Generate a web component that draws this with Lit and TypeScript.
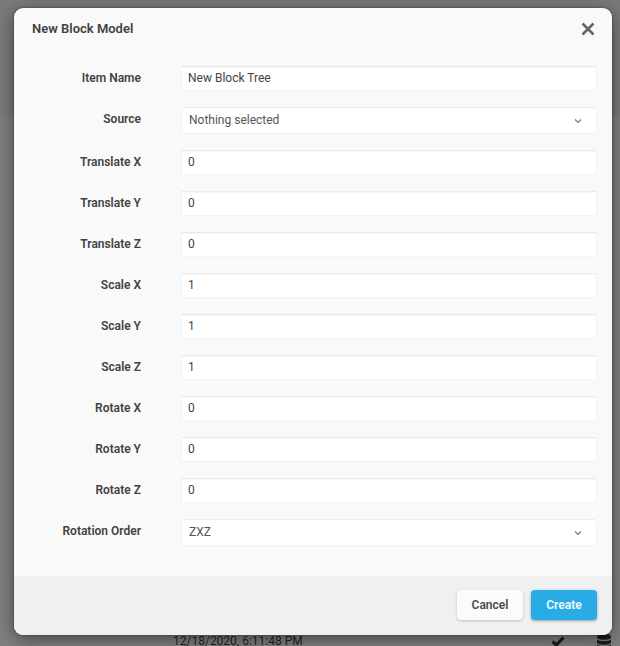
import { LitElement, html, css } from "lit";
import { customElement, property, state } from "lit/decorators.js";

interface Field {
  id: string;
  label: string;
  value: string;
  options?: string[];
}

const FIELDS: Field[] = [
  { id: "name", label: "Item Name", value: "New Block Tree" },
  { id: "source", label: "Source", value: "Nothing selected", options: ["Nothing selected"] },
  { id: "tx", label: "Translate X", value: "0" },
  { id: "ty", label: "Translate Y", value: "0" },
  { id: "tz", label: "Translate Z", value: "0" },
  { id: "sx", label: "Scale X", value: "1" },
  { id: "sy", label: "Scale Y", value: "1" },
  { id: "sz", label: "Scale Z", value: "1" },
  { id: "rx", label: "Rotate X", value: "0" },
  { id: "ry", label: "Rotate Y", value: "0" },
  { id: "rz", label: "Rotate Z", value: "0" },
  { id: "order", label: "Rotation Order", value: "ZXZ", options: ["ZXZ", "XYZ", "ZYX"] },
];

@customElement("form-field")
class FormField extends LitElement {
  @property({ attribute: false }) field!: Field;

  static styles = css`
    :host {
      display: grid;
      grid-template-columns: 109px 1fr;
      column-gap: 40px;
      align-items: start;
    }
    label {
      font-weight: 600;
      line-height: 24px;
      text-align: right;
      white-space: nowrap;
      color: #424242;
    }
    input,
    select {
      box-sizing: border-box;
      width: 100%;
      min-width: 0;
      margin: 0;
      font: inherit;
      color: #444;
      background: #fff;
      border: 1px solid #f4f4f4;
      border-top-color: #ebebeb;
      outline: none;
      appearance: none;
    }
    input {
      height: 25px;
      padding: 0 6px 1px;
      box-shadow: inset 0 1px 0 #f7f7f7;
    }
    select {
      height: 27px;
      padding: 0 7px 2px;
      border-radius: 4px;
      color: #555;
    }
    .picker {
      display: grid;
      align-items: center;
    }
    .picker > * {
      grid-area: 1 / 1;
    }
    .chevron {
      justify-self: end;
      width: 8px;
      height: 6px;
      margin-right: 15px;
      pointer-events: none;
    }
  `;

  render() {
    const f = this.field;
    return html`
      <label for=${f.id}>${f.label}</label>
      ${f.options
        ? html`<div class="picker">
            <select id=${f.id}>
              ${f.options.map((o) => html`<option ?selected=${o === f.value}>${o}</option>`)}
            </select>
            <svg class="chevron" viewBox="0 0 8 6" aria-hidden="true">
              <path d="M1 1.5 4 4.5 7 1.5" fill="none" stroke="#5a80ac" stroke-width="1.2" />
            </svg>
          </div>`
        : html`<input id=${f.id} type="text" .value=${f.value} />`}
    `;
  }
}

@customElement("app-root")
class AppRoot extends LitElement {
  @state() private fields = FIELDS;

  static styles = css`
    :host {
      display: block;
      position: relative;
      overflow: hidden;
      min-height: 100vh;
      font-family: Roboto, "Liberation Sans", sans-serif;
      font-size: 12px;
      background: #7f7f7f;
    }
    .page {
      position: absolute;
      inset: 0;
      display: flex;
      flex-direction: column;
      justify-content: space-between;
    }
    .band {
      height: 117px;
      background: #7a7a7a;
    }
    .row {
      display: grid;
      grid-template-columns: 1fr 14px 14px;
      column-gap: 32px;
      align-items: center;
      height: 12px;
      padding: 0 9px 0 173px;
      color: #1f1f1f;
    }
    .row svg {
      width: 14px;
      height: 14px;
    }
    .dialog {
      position: relative;
      margin: 8px 8px 11px 14px;
      border-radius: 9px;
      background: #f9f9f9;
      box-shadow: 0 0 2px rgba(0, 0, 0, 0.6), 0 4px 18px rgba(0, 0, 0, 0.45);
    }
    .head {
      display: flex;
      justify-content: space-between;
      align-items: center;
      height: 42px;
      padding: 0 17px 0 18px;
    }
    h1 {
      margin: 0;
      padding-bottom: 2px;
      font-size: 13px;
      font-weight: 600;
      color: #424242;
    }
    button {
      font: inherit;
      border: 0;
      cursor: pointer;
    }
    .close {
      display: flex;
      padding: 0;
      background: none;
    }
    .close svg {
      width: 14px;
      height: 14px;
    }
    .fields {
      display: grid;
      row-gap: 16px;
      padding: 16px 15px 30px 18px;
    }
    .foot {
      display: flex;
      justify-content: flex-end;
      gap: 8px;
      padding: 14px 15px 15px;
      background: #f0f0f0;
      border-radius: 0 0 9px 9px;
    }
    .foot button {
      width: 66px;
      height: 30px;
      padding: 0;
      border-radius: 4px;
      font-weight: 600;
      color: #4a4a4a;
      background: #fbfbfb;
      box-shadow: 0 1px 3px rgba(0, 0, 0, 0.2);
    }
    .foot .primary {
      color: #f4fbff;
      background: #29abe6;
      box-shadow: 0 1px 3px rgba(0, 0, 0, 0.35);
    }
  `;

  render() {
    return html`
      <div class="page">
        <div class="band"></div>
        <div class="row">
          <span>12/18/2020, 6:11:48 PM</span>
          <svg viewBox="0 0 14 14" aria-hidden="true">
            <path d="M1.5 7.500 5.200 11 12.500 3.500" fill="none" stroke="#1c1c1c" stroke-width="3.200" />
          </svg>
          <svg viewBox="0 0 14 14" fill="#1c1c1c" aria-hidden="true">
            <path d="M0 2.500C0-.8 14-.8 14 2.500v1c0 3-14 3-14 0z" />
            <path d="M0 5.500c2 2 12 2 14 0v3c0 3-14 3-14 0z" />
            <path d="M0 10.500c2 2 12 2 14 0v2c0 3-14 3-14 0z" />
          </svg>
        </div>
      </div>
      <form class="dialog" role="dialog" aria-labelledby="title" @submit=${(e: Event) => e.preventDefault()}>
        <header class="head">
          <h1 id="title">New Block Model</h1>
          <button class="close" type="button" aria-label="Close">
            <svg viewBox="0 0 14 14" aria-hidden="true">
              <path d="M1.500 1.500 12.500 12.500M12.500 1.500 1.500 12.500" stroke="#666" stroke-width="2.600" />
            </svg>
          </button>
        </header>
        <div class="fields">
          ${this.fields.map((f) => html`<form-field .field=${f}></form-field>`)}
        </div>
        <footer class="foot">
          <button type="button">Cancel</button>
          <button class="primary" type="submit">Create</button>
        </footer>
      </form>
    `;
  }
}
